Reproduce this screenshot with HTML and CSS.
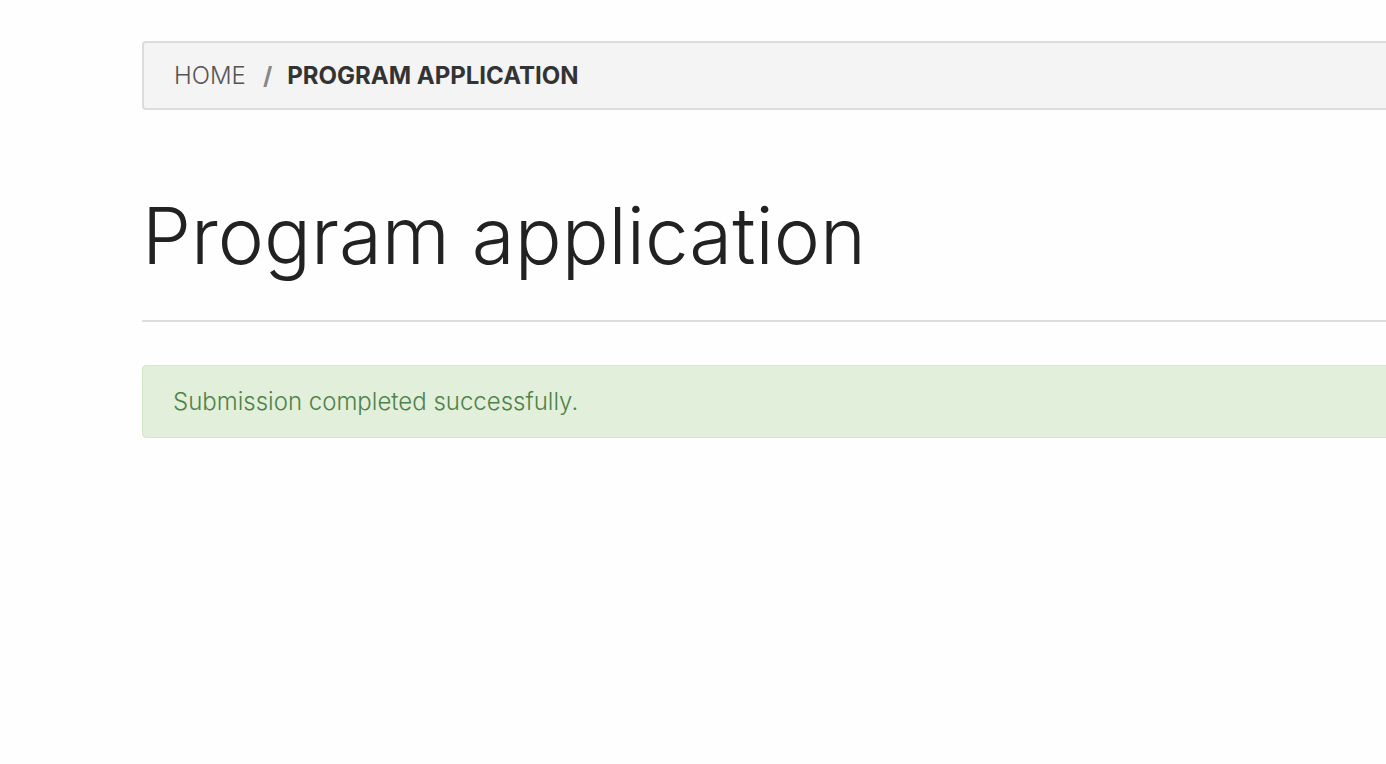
FILE: index.html
```html
<!DOCTYPE html>
<html lang="en">
<head>
<meta charset="utf-8">
<title>Program application</title>
<link rel="stylesheet" href="styles.css">
</head>
<body>
<div class="page">
  <nav class="breadcrumb">
    <span class="crumb">HOME</span>
    <span class="sep">/</span>
    <span class="crumb current">PROGRAM APPLICATION</span>
  </nav>
  <h1 class="title">Program application</h1>
  <hr class="rule">
  <div class="alert">Submission completed successfully.</div>
</div>
</body>
</html>
```

FILE: styles.css
```css
html, body {
  margin: 0;
  padding: 0;
  background: #fefefe;
  overflow: hidden;
}
body {
  font-family: Inter, "Liberation Sans", sans-serif;
  color: #222;
}
.page {
  width: 1300px;
  margin-left: 142px;
  padding-top: 41px;
}
.breadcrumb {
  display: flex;
  align-items: center;
  height: 65px;
  padding: 0 30px;
  background: #f4f4f4;
  border: 2px solid #dcdcdc;
  border-radius: 4px;
  font-size: 24px;
}
.crumb {
  font-weight: 300;
  color: #555;
}
.sep {
  font-weight: 700;
  color: #888;
  margin: 0 15px 0 17px;
}
.crumb.current {
  font-weight: 700;
  color: #333;
}
.title {
  margin: 83px 0 0;
  font-size: 78px;
  font-weight: 300;
  line-height: 1.1;
  color: #222;
}
.rule {
  margin: 41px 0 0;
  border: 0;
  border-top: 2px solid #dddddd;
}
.alert {
  margin-top: 43px;
  box-sizing: border-box;
  height: 73px;
  display: flex;
  align-items: center;
  padding: 0 30px;
  background: #e1efdb;
  border: 1px solid #d3e7c9;
  border-radius: 4px;
  color: #4f8248;
  font-size: 24px;
  font-weight: 300;
}
```
